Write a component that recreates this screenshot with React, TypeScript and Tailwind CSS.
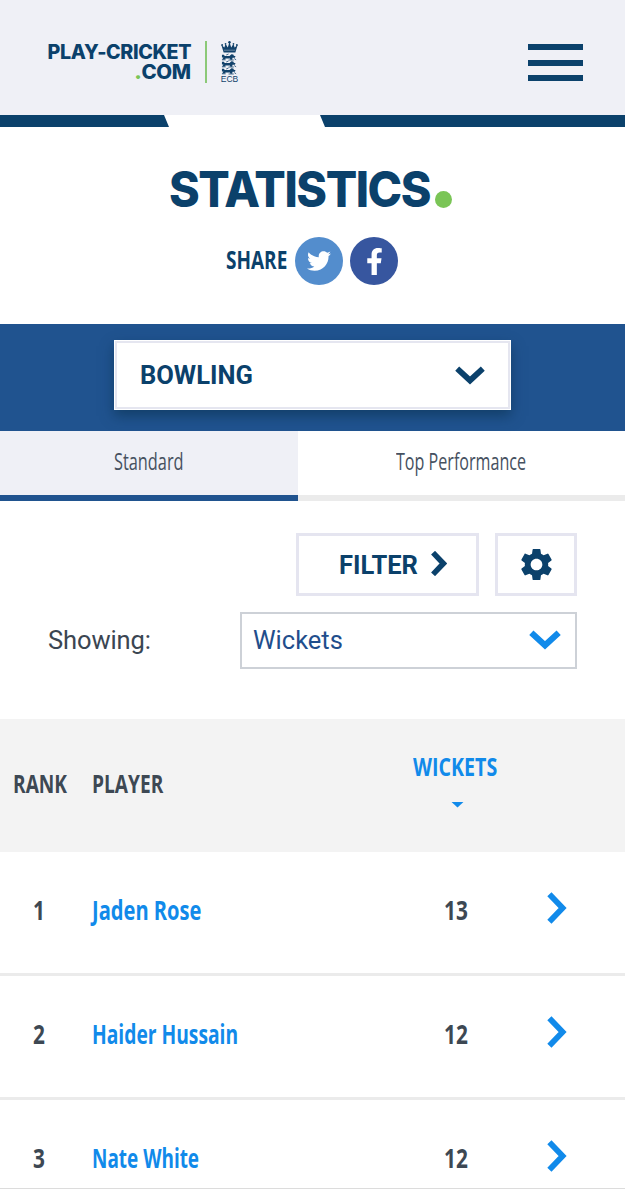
import React from "react";
import { FaFacebookF, FaTwitter } from "react-icons/fa";
import { MdSettings } from "react-icons/md";

const players = [
  { rank: 1, name: "Jaden Rose", wickets: 13, nameScale: "scale-x-[0.773]" },
  { rank: 2, name: "Haider Hussain", wickets: 12, nameScale: "scale-x-[0.74]" },
  { rank: 3, name: "Nate White", wickets: 12, nameScale: "scale-x-[0.728]" },
];

const condensed = "block w-fit origin-left whitespace-nowrap leading-none font-['Open_Sans',sans-serif]";

const ChevronDown: React.FC<{ className?: string }> = ({ className }) => (
  <svg viewBox="0 0 30 18" className={className} fill="none" stroke="currentColor" strokeWidth="5.8">
    <path d="M2.2 2.2 15 14 27.8 2.2" />
  </svg>
);

const ChevronRight: React.FC<{ className?: string; strokeWidth?: number }> = ({ className, strokeWidth = 5.8 }) => (
  <svg viewBox="0 0 20 32" className={className} fill="none" stroke="currentColor" strokeWidth={strokeWidth}>
    <path d="M2.4 2.2 15.6 16 2.4 29.8" />
  </svg>
);

const Lion: React.FC<{ y: number }> = ({ y }) => (
  <g transform={`translate(0 ${y})`}>
    <path d="M1 1.2h2l1 1.2h5l2-1.8 2 .2.6 1.4 1.8.4-.8 1.6h-2.4l-.4 2H10l-.6-1.4H5L3.6 6H1.2L2.6 3.8H1z" />
    <path d="M5.5 1.4 8 .4M1 6.2h4M8 6.4h5.5M14 5l2 1.2" fill="none" stroke="currentColor" strokeWidth=".8" />
  </g>
);

const Crest = () => (
  <div className="w-[17px] flex flex-col items-center text-[#12426b]">
    <svg viewBox="0 0 18 34" preserveAspectRatio="none" className="w-[17px] h-[34px]" fill="currentColor">
      <path d="M2.8 11.4 .4 4 3.6 6.6 4.8 2.8 7.2 6.4 9 1l1.8 5.4 2.4-3.6 1.2 3.8L17.6 4l-2.4 7.4z" />
      <circle cx="9" cy="1.3" r="1.3" />
      <circle cx="4.8" cy="2.8" r=".9" />
      <circle cx="13.2" cy="2.8" r=".9" />
      <circle cx="1.2" cy="4" r="1" />
      <circle cx="16.8" cy="4" r="1" />
      <path d="M3 9.2h12" stroke="#eff0f6" strokeWidth=".4" />
      <Lion y={12.6} />
      <Lion y={19.6} />
      <Lion y={26.6} />
    </svg>
    <span className="text-[8.5px] leading-[9px] font-['Liberation_Sans',sans-serif]">ECB</span>
  </div>
);

const Header = () => (
  <header className="h-[115px] bg-[#eff0f6] flex justify-between pl-[47px] pr-[42px]">
    <div className="flex pt-[41px]">
      <div className="w-[144px] flex flex-col items-end pt-[2px] text-[#0b416b] font-['Inter',sans-serif] font-extrabold text-[19.5px] leading-[19.5px] tracking-[-0.4px] whitespace-nowrap">
        <span className="origin-right scale-x-[1.01]">PLAY-CRICKET</span>
        <span className="origin-right scale-x-[1.05]"><span className="text-[#7ac556] font-black">.</span>COM</span>
      </div>
      <div className="ml-[14px] w-[2px] h-[42px] bg-[#8cc978]" />
      <div className="ml-[14px]">
        <Crest />
      </div>
    </div>
    <div className="mt-[44px] w-[55px] h-[37px] flex flex-col justify-between">
      <div className="h-[6px] bg-[#0b416b]" />
      <div className="h-[6px] bg-[#0b416b]" />
      <div className="h-[6px] bg-[#0b416b]" />
    </div>
  </header>
);

const Title = () => (
  <section className="h-[209px]">
    <div className="h-[12px] flex justify-between">
      <div className="w-[169px] bg-[#0b416b] [clip-path:polygon(0_0,164px_0,169px_100%,0_100%)]" />
      <div className="w-[305px] bg-[#0b416b] [clip-path:polygon(0_0,100%_0,100%_100%,5px_100%)]" />
    </div>
    <div className="flex pl-[169px] pt-[38px] h-[110px]">
      <h1 className="w-[266px] origin-left scale-x-[0.95] whitespace-nowrap text-[#0b416b] font-['Inter',sans-serif] font-extrabold text-[49px] leading-[50px] tracking-[-1.5px]">STATISTICS</h1>
      <div className="mt-[26px] size-[17px] rounded-full bg-[#7ac556]" />
    </div>
    <div className="flex pl-[226px] items-center">
      <div className="w-[69px] -mt-[3px]">
        <span className={`${condensed} scale-x-[0.76] text-[25px] font-bold text-[#0b416b]`}>SHARE</span>
      </div>
      <a className="size-[48px] rounded-full bg-[#538dcd] text-white flex items-center justify-center">
        <FaTwitter className="size-[24px]" />
      </a>
      <a className="ml-[7px] size-[48px] rounded-full bg-[#37569f] text-white flex items-center justify-center">
        <FaFacebookF className="size-[27px]" />
      </a>
    </div>
  </section>
);

const Tabs = () => (
  <nav className="flex h-[70px]">
    <div className="w-[298px] bg-[#eff0f6] border-b-[6px] border-[#20538f] pl-[114px] pt-[19px]">
      <span className={`${condensed} scale-x-[0.71] text-[23px] text-[#46515f]`}>Standard</span>
    </div>
    <div className="flex-1 border-b-[6px] border-[#ebebeb] pl-[98px] pt-[19px]">
      <span className={`${condensed} scale-x-[0.7] text-[23px] text-[#46515f]`}>Top Performance</span>
    </div>
  </nav>
);

const App: React.FC = () => {
  return (
    <div className="w-[625px] h-[1200px] overflow-hidden bg-white font-['Roboto',sans-serif]">
      <Header />
      <Title />

      <div className="h-[107px] bg-[#20538f] pt-[16px] pl-[114px]">
        <div className="w-[397px] h-[70px] bg-white border border-white shadow-[0_6px_12px_rgba(10,50,80,0.6)]">
          <div className="h-full border-2 border-[#e5e6f0] flex items-center justify-between pl-[23px] pr-[23px]">
            <span className="mt-[1px] text-[25.5px] leading-none font-bold text-[#0b416b]">BOWLING</span>
            <ChevronDown className="mt-[1px] w-[30px] h-[19px] text-[#0b416b]" />
          </div>
        </div>
      </div>

      <Tabs />

      <div className="flex pl-[296px] pt-[32px] gap-[16px]">
        <button className="w-[183px] h-[63px] border-[3px] border-[#e5e5f0] flex items-center pl-[40px] text-[#0b416b]">
          <span className="mt-[2px] w-[92px] text-left text-[25.5px] leading-none font-bold">FILTER</span>
          <ChevronRight className="-mt-[2px] w-[16px] h-[25px]" strokeWidth={7} />
        </button>
        <button className="w-[82px] h-[63px] border-[3px] border-[#e5e5f0] flex items-center justify-center text-[#0b416b]">
          <MdSettings className="size-[39px] -mt-[1px]" />
        </button>
      </div>

      <div className="flex items-center pl-[48px] pt-[16px] pb-[50px]">
        <span className="w-[192px] text-[25.5px] leading-none text-[#3b4652] tracking-[-0.1px]">Showing:</span>
        <div className="w-[337px] h-[57px] border-2 border-[#cdd1d7] flex items-center justify-between pl-[11px] pr-[14px]">
          <span className="text-[25.5px] leading-none text-[#1f4e8c]">Wickets</span>
          <ChevronDown className="-mt-[2px] w-[32px] h-[20px] text-[#118aea]" />
        </div>
      </div>

      <div className="flex h-[133px] bg-[#f3f3f3] text-[25.5px] font-bold text-[#3d4853]">
        <div className="w-[92px] pl-[13px] pt-[52px]">
          <span className={`${condensed} scale-x-[0.75]`}>RANK</span>
        </div>
        <div className="w-[321px] pt-[52px]">
          <span className={`${condensed} scale-x-[0.75]`}>PLAYER</span>
        </div>
        <div className="pt-[35px] text-[#118aea]">
          <span className={`${condensed} scale-x-[0.77]`}>WICKETS</span>
          <div className="ml-[38px] mt-[22px] w-[13px] h-[6px] bg-[#118aea] [clip-path:polygon(0_0,100%_0,50%_100%)]" />
        </div>
      </div>

      {players.map((p) => (
        <div
          key={p.rank}
          className="flex h-[124px] pt-[45px] border-b-[3px] border-[#ebebeb] last:h-[89px] last:border-b text-[26px] font-bold text-[#3d4853] last:border-[#dcdcdc]"
        >
          <div className="w-[92px] pl-[33px]">
            <span className={`${condensed} scale-x-[0.8]`}>{p.rank}</span>
          </div>
          <div className="w-[352px] text-[#118aea]">
            <span className={`${condensed} ${p.nameScale}`}>{p.name}</span>
          </div>
          <div className="w-[103px]">
            <span className={`${condensed} scale-x-[0.8]`}>{p.wickets}</span>
          </div>
          <ChevronRight className="-mt-[5px] w-[20px] h-[32px] text-[#118aea]" />
        </div>
      ))}
    </div>
  );
};

export default App;
